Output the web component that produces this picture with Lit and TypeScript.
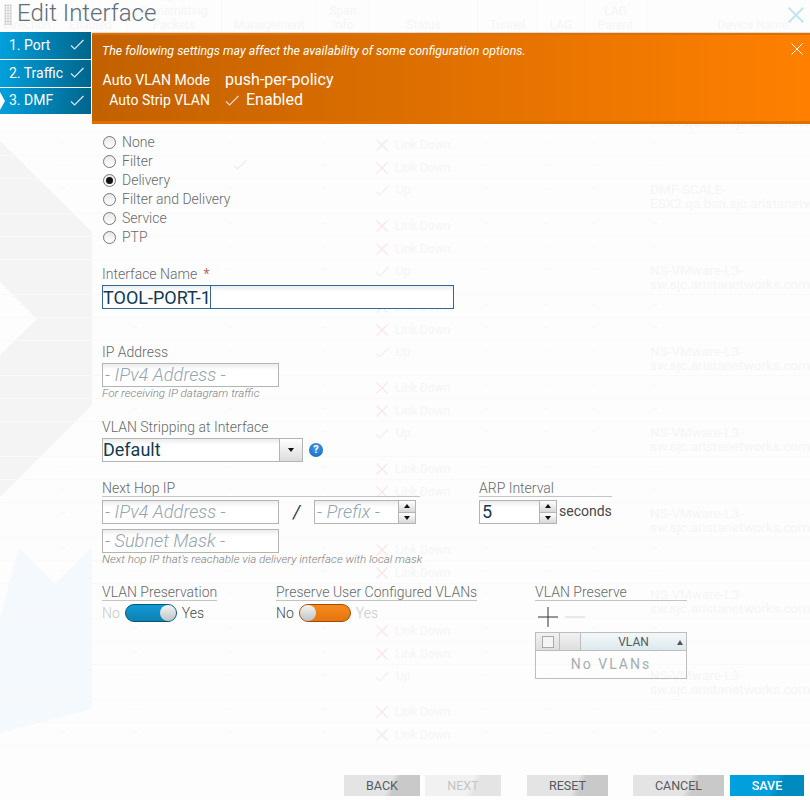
import { LitElement, html, css, svg } from "lit";
import { customElement } from "lit/decorators.js";

const check = (cls: string) => html`<svg class=${cls} viewBox="0 0 14 11"><path d="M1 6.5 L4.6 10 L13.5 1" fill="none" stroke="currentColor" stroke-width="1.2"/></svg>`;
const cross = (cls: string) => html`<svg class=${cls} viewBox="0 0 12 12"><path d="M.5 .5 L11.5 11.5 M11.5 .5 L.5 11.5" fill="none" stroke="currentColor" stroke-width="1"/></svg>`;

@customElement("app-root")
export class AppRoot extends LitElement {
  static styles = css`
    :host { display: block; width: 810px; height: 800px; font-family: Roboto, "Noto Sans", sans-serif; }
    * { box-sizing: border-box; }
    .page { position: relative; width: 810px; height: 800px; overflow: hidden; background: #fdfdfd; }

    .shapes { position: absolute; left: 0; top: 0; width: 92px; height: 800px; }
    .backdrop { position: absolute; left: 0; top: 0; width: 810px; color: #f5f5f5; font-size: 12px; line-height: 14px; }
    .thead, .trow { display: grid; grid-template-columns: 55px 72px 95px 95px 53px 108px 60px 47px 62px 163px; }
    .thead { height: 52px; padding-bottom: 20px; align-items: end; }
    .thead > div { height: 46px; display: flex; align-items: flex-end; justify-content: center; text-align: center; border-right: 1px solid #f9f9f9; margin-top: -14px; }
    .thead > div.dev { justify-content: flex-end; padding-right: 22px; border-right: 0; }
    .trow { border-bottom: 1px solid #f9f9f9; height: 23px; align-items: start; padding-top: 3px; }
    .trow.tall { height: 35px; }
    .trow > div { padding-left: 5px; white-space: nowrap; color: #f5f5f5; }
    .trow > div.dev { padding-left: 3px; font-size: 13.5px; }
    .dash { font-size: 8px; color: #efefef; }
    .trow > div.status { display: flex; align-items: center; gap: 7px; font-size: 12px; padding-top: 2px; }
    .trow.tall > div.status { padding-top: 1px; }
    .xi { width: 12px; height: 12px; color: #fbe7e7; flex: none; margin-left: 1px; }
    .xi path { stroke-width: 1.3; }
    .ci { width: 14px; height: 11px; color: #e9f5e9; flex: none; }
    .ci2 { width: 14px; height: 11px; color: #ececec; margin-left: 6px; }

    .dialog { position: relative; width: 810px; height: 800px; display: flex; flex-direction: column; }
    .title { height: 32px; display: flex; align-items: flex-start; padding-left: 4px; flex: none; }
    .grip { width: 8px; height: 21px; margin-top: 4px; background-image: radial-gradient(circle, #cfcfcf 1px, transparent 1.1px); background-size: 2.7px 2.7px; }
    h1 { margin: -2px 0 0 5px; font-size: 24px; line-height: 30px; font-weight: 300; color: #5d6d7a; }
    .close-top { position: absolute; right: 6px; top: 7px; width: 16px; height: 16px; color: #c4e3f4; }
    .close-top path { stroke-width: 1.5; }

    .body { flex: 1; display: grid; grid-template-columns: 92px 1fr; min-height: 0; }
    .steps { display: flex; flex-direction: column; gap: 1px; }
    .step { position: relative; height: 27px; width: 91px; padding: 0 7px 2px 9px; display: flex; align-items: center; justify-content: space-between; color: #fff; font-size: 14px; background: linear-gradient(90deg, #00a0dc, #00658c); }
    .step.current { height: 26px; }
    .step .tick { width: 14px; height: 11px; color: #d8e6ec; }
    .step.current::before { content: ""; position: absolute; left: 0; top: 4px; border-left: 5px solid #fff; border-top: 9px solid transparent; border-bottom: 9px solid transparent; }

    .main { display: flex; flex-direction: column; min-height: 0; }
    .banner { height: 92px; flex: none; border-top: 1px solid #dcdcdc; background: #df7000; padding: 2px 0 3px; }
    .banner-in { position: relative; height: 86px; background: linear-gradient(90deg, #c26100, #ff8000); color: #fff; padding: 8px 10px 0; }
    .warn { margin: 0 0 11px; font-size: 12.36px; line-height: 16px; font-style: italic; font-weight: 400; }
    .kv { display: grid; grid-template-columns: 108px auto; column-gap: 15px; justify-content: start; align-items: center; }
    .k { font-size: 14px; text-align: right; line-height: 20px; }
    .v { font-size: 16px; line-height: 20px; display: flex; align-items: center; gap: 7px; }
    .v svg { width: 14px; height: 11px; color: #e8d8c8; }
    .banner-x { position: absolute; right: 7px; top: 8px; width: 12px; height: 12px; color: #fff; }

    .form { padding: 9px 0 0 10px; color: #66696c; font-size: 14px; font-weight: 300; }
    .radio { display: flex; align-items: center; height: 19px; gap: 6px; padding-left: 1px; }
    .radio span { margin-top: -2px; }
    .radio input { appearance: none; margin: 0; width: 13px; height: 13px; border-radius: 50%; border: 1px solid #767676; background: linear-gradient(#e8e8e8, #fff); display: grid; place-items: center; }
    .radio input:checked::before { content: ""; width: 7px; height: 7px; border-radius: 50%; background: #111; }
    .lbl { line-height: 16px; height: 16px; display: block; white-space: nowrap; }
    .req { color: #c46a68; margin-left: 3px; font-weight: 400; }
    .mt-name { margin-top: 19px; }
    .mt-ip { margin-top: 35px; }
    .mt-strip { margin-top: 19px; }
    .under { border-bottom: 1px solid #c4c4c4; height: 17px; }

    .field { display: block; height: 24px; margin: 3px 0 0; padding: 0 2px 1px; border: 1px solid #b4b4b4; outline: 0; font: 18px Roboto, sans-serif; color: #113a52; background: linear-gradient(#ececec, #fff 6px); width: 177px; border-radius: 0; }
    .field.name { width: 352px; border-color: #336699; padding: 0; }
    .field::placeholder { font-style: italic; font-size: 18.2px; font-weight: 300; color: #93a5b2; opacity: 1; }
    .name-wrap { position: relative; width: 352px; }
    .caret { position: absolute; left: 108px; top: 1px; width: 1px; height: 22px; background: #336699; }
    .hint { font-size: 11.6px; font-style: italic; line-height: 13px; height: 13px; white-space: nowrap; color: #7d7f84; }

    .select { display: flex; align-items: center; margin-top: 3px; height: 24px; }
    .select-box { width: 201px; height: 24px; border: 1px solid #b4b4b4; display: flex; background: linear-gradient(#ececec, #fff 6px); font-size: 18px; font-weight: 400; color: #113a52; line-height: 22px; }
    .select-box span { flex: 1; }
    .select-arrow { width: 23px; border-left: 1px solid #b4b4b4; background: linear-gradient(#fff, #dcdcdc); display: grid; place-items: center; }
    .tri-d { width: 0; height: 0; border-left: 3.5px solid transparent; border-right: 3.5px solid transparent; border-top: 4px solid #111; }
    .tri-u { width: 0; height: 0; border-left: 3.5px solid transparent; border-right: 3.5px solid transparent; border-bottom: 4px solid #111; }
    .help { width: 14px; height: 14px; border-radius: 50%; margin-left: 6px; background: radial-gradient(circle at 50% 35%, #3f9be8, #1565b8); color: #fff; font-size: 11px; font-weight: 700; line-height: 14px; text-align: center; }

    .row2 { display: flex; margin-top: 18px; gap: 59px; }
    .hop { width: 318px; }
    .arp { width: 133px; }
    .hop-line { display: flex; align-items: flex-start; }
    .slash { width: 35px; text-align: center; font-size: 18px; font-weight: 400; line-height: 24px; margin-top: 3px; color: #1c3a4f; font-style: italic; }
    .spin { display: flex; margin-top: 3px; height: 24px; }
    .spin .field { margin: 0; }
    .spin-btns { width: 17px; height: 24px; border: 1px solid #b4b4b4; border-left: 0; display: grid; grid-template-rows: 1fr 1fr; gap: 1px; background: #b4b4b4; }
    .spin-btns div { background: linear-gradient(#fff, #d8d8d8); display: grid; place-items: center; }
    .secs { color: #45484d; font-weight: 400; margin: 3px 0 0 2px; line-height: 22px; }
    .subnet { margin-top: 5px; }
    .prefix { width: 85px; }
    .arpf { width: 61px; }

    .row3 { display: flex; margin-top: 18px; }
    .c1 { width: 115px; margin-right: 59px; }
    .c2 { width: 201px; margin-right: 58px; }
    .c3 { width: 152px; }
    .tog-row { display: flex; align-items: center; height: 18px; margin-top: 3px; gap: 5px; white-space: nowrap; color: #45484c; }
    .off { color: #c8c8c8; }
    .toggle { width: 52px; height: 18px; border-radius: 9px; display: flex; align-items: center; }
    .toggle.on { background: linear-gradient(#0e9bd6, #1180b0); border: 1px solid #00567a; justify-content: flex-end; }
    .toggle.or { background: linear-gradient(#f58a1e, #e67410); border: 1px solid #a04c00; justify-content: flex-start; }
    .knob { width: 16px; height: 16px; border-radius: 50%; background: linear-gradient(#f4f4f4, #bfc4c6); }

    .tools { display: flex; align-items: center; height: 20px; margin-top: 6px; padding-left: 3px; gap: 7px; }
    .tools svg { width: 20px; height: 20px; }
    .grid { margin-top: 5px; height: 47px; border: 1px solid #bdbdbd; }
    .grid-h { display: grid; grid-template-columns: 24px 21px 1fr; height: 18px; border-bottom: 1px solid #bdbdbd; }
    .grid-h > div { background: linear-gradient(#f2f2f2, #dedede); border-right: 1px solid #bdbdbd; display: flex; align-items: center; justify-content: center; }
    .grid-h > div.vl { position: relative; border-right: 0; background: linear-gradient(#f3f8fa, #dde9ee); font-size: 12px; font-weight: 400; color: #55585c; }
    .box { width: 12px; height: 12px; border: 1px solid #a8a8a8; background: #f4f4f4; }
    .sort { position: absolute; right: 3px; top: 7px; border-left: 3px solid transparent; border-right: 3px solid transparent; border-bottom: 5px solid #555; }
    .empty { text-align: center; letter-spacing: 2px; line-height: 27px; color: #a4adb4; font-size: 14px; font-weight: 400; }

    .footer { margin-top: auto; display: flex; padding: 0 6px 4px 0; justify-content: flex-end; }
    .btn { height: 21px; border: 0; padding: 0; font: 12.5px/21px Roboto, sans-serif; color: #55585e; background: linear-gradient(115deg, #e4e4e4 58%, #c9c9c9 66%); }
    .btn.dis { color: #c4c4c4; background: linear-gradient(115deg, #f1f1f1 58%, #e4e4e4 66%); }
    .btn.pri { color: #fff; font-weight: 500; background: linear-gradient(115deg, #00a0dc 58%, #008bc0 66%); }
    .w76 { width: 76px; margin-right: 5px; }
    .w76b { width: 76px; margin-right: 26px; }
    .w81 { width: 81px; margin-right: 25px; }
    .w91 { width: 91px; margin-right: 6px; }
    .w74 { width: 74px; }
  `;

  private shapes() {
    return svg`<svg class="shapes" viewBox="0 0 92 800">
      <path d="M0 141 L92 232 V405 L0 497 V355 L37 319 L0 282 Z" fill="#f4f4f5"/>
      <path d="M19 548 L55 584 L92 547 V709 L0 733 V618 Z" fill="#f3f9fc"/>
    </svg>`;
  }

  private row(checked: boolean, tall: boolean, name: string[]) {
    const d = html`<div class="dash">—</div>`;
    return html`<div class="trow ${tall ? "tall" : ""}">
      <div></div>${d}${d}
      ${checked ? html`<div>${check("ci2")}</div>` : d}
      ${d}
      <div class="status">${tall ? check("ci") : cross("xi")}<span>${tall ? "Up" : "Link Down"}</span></div>
      ${d}${d}${d}
      ${name.length ? html`<div class="dev">${name[0]}<br />${name[1]}</div>` : d}
    </div>`;
  }

  private table() {
    const heads = [["Direction"], ["Admin", "Enabled"], ["Is It", "Transmitting", "Packets"], ["Management"], ["Span", "Info"], ["Status"], ["Tunnel"], ["LAG"], ["LAG", "Parent"], ["Device Name"]];
    const groups = [];
    for (let i = 0; i < 9; i++) {
      const name = i === 0 ? ["DMF-SCALE-", "ESX1.qa.bsn.sjc.aristanetworks.com"] : i === 1 ? ["DMF-SCALE-", "ESX2.qa.bsn.sjc.aristanetworks.com"] : ["NS-VMware-L3-", "sw.sjc.aristanetworks.com"];
      groups.push(html`${this.row(false, false, [])}${this.row(i === 1, false, [])}${i < 8 ? this.row(false, true, name) : ""}`);
    }
    return html`<div class="backdrop">
      <div class="thead">${heads.map((h, i) => html`<div class=${i === 9 ? "dev" : ""}><span>${h.map((l, j) => html`${j ? html`<br />` : ""}${l}`)}</span></div>`)}</div>
      ${groups}
    </div>`;
  }

  private spinBtns() {
    return html`<div class="spin-btns"><div><span class="tri-u"></span></div><div><span class="tri-d"></span></div></div>`;
  }

  render() {
    const steps = ["1. Port", "2. Traffic", "3. DMF"];
    const radios = ["None", "Filter", "Delivery", "Filter and Delivery", "Service", "PTP"];
    return html`<div class="page">
      ${this.shapes()}
      ${this.table()}
      <div class="dialog">
        <div class="title"><div class="grip"></div><h1>Edit Interface</h1></div>
        ${cross("close-top")}
        <div class="body">
          <nav class="steps">
            ${steps.map((s, i) => html`<div class="step ${i === 2 ? "current" : ""}"><span>${s}</span>${check("tick")}</div>`)}
          </nav>
          <div class="main">
            <div class="banner"><div class="banner-in">
              <p class="warn">The following settings may affect the availability of some configuration options.</p>
              <div class="kv">
                <div class="k">Auto VLAN Mode</div><div class="v">push-per-policy</div>
                <div class="k">Auto Strip VLAN</div><div class="v">${check("")}Enabled</div>
              </div>
              ${cross("banner-x")}
            </div></div>
            <div class="form">
              ${radios.map((r) => html`<label class="radio"><input type="radio" name="role" ?checked=${r === "Delivery"} /><span>${r}</span></label>`)}
              <label class="lbl mt-name">Interface Name <span class="req">*</span></label>
              <div class="name-wrap"><input class="field name" .value=${"TOOL-PORT-1"} /><div class="caret"></div></div>
              <label class="lbl mt-ip">IP Address</label>
              <input class="field" placeholder="- IPv4 Address -" />
              <div class="hint">For receiving IP datagram traffic</div>
              <label class="lbl mt-strip">VLAN Stripping at Interface</label>
              <div class="select">
                <div class="select-box"><span>Default</span><div class="select-arrow"><span class="tri-d"></span></div></div>
                <div class="help">?</div>
              </div>
              <div class="row2">
                <div class="hop">
                  <label class="lbl under">Next Hop IP</label>
                  <div class="hop-line">
                    <input class="field" placeholder="- IPv4 Address -" />
                    <div class="slash">/</div>
                    <div class="spin"><input class="field prefix" placeholder="- Prefix -" />${this.spinBtns()}</div>
                  </div>
                  <input class="field subnet" placeholder="- Subnet Mask -" />
                  <div class="hint">Next hop IP that's reachable via delivery interface with local mask</div>
                </div>
                <div class="arp">
                  <label class="lbl under">ARP Interval</label>
                  <div class="hop-line">
                    <div class="spin"><input class="field arpf" .value=${"5"} />${this.spinBtns()}</div>
                    <div class="secs">seconds</div>
                  </div>
                </div>
              </div>
              <div class="row3">
                <div class="c1">
                  <label class="lbl under">VLAN Preservation</label>
                  <div class="tog-row"><span class="off">No</span><div class="toggle on"><div class="knob"></div></div><span>Yes</span></div>
                </div>
                <div class="c2">
                  <label class="lbl under">Preserve User Configured VLANs</label>
                  <div class="tog-row"><span>No</span><div class="toggle or"><div class="knob"></div></div><span class="off">Yes</span></div>
                </div>
                <div class="c3">
                  <label class="lbl under">VLAN Preserve</label>
                  <div class="tools">
                    <svg viewBox="0 0 20 20"><path d="M0 10H20M10 0V20" stroke="#333" stroke-width="1" fill="none"/></svg>
                    <svg viewBox="0 0 20 20"><path d="M0 10H20" stroke="#d4d4d4" stroke-width="1" fill="none"/></svg>
                  </div>
                  <div class="grid">
                    <div class="grid-h"><div><div class="box"></div></div><div></div><div class="vl">VLAN<span class="sort"></span></div></div>
                    <div class="empty">No VLANs</div>
                  </div>
                </div>
              </div>
            </div>
            <div class="footer">
              <button class="btn w76">BACK</button>
              <button class="btn dis w76b">NEXT</button>
              <button class="btn w81">RESET</button>
              <button class="btn w91">CANCEL</button>
              <button class="btn pri w74">SAVE</button>
            </div>
          </div>
        </div>
      </div>
    </div>`;
  }
}
